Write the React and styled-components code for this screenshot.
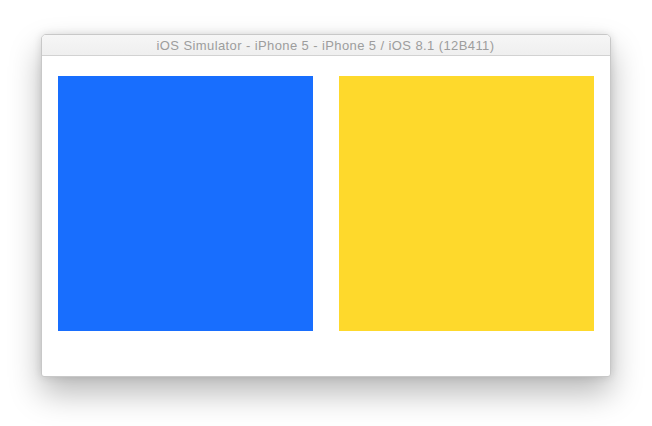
import React from "react";
import styled, { createGlobalStyle } from "styled-components";

const GlobalStyle = createGlobalStyle`
  html, body {
    margin: 0;
    padding: 0;
    background: #fff;
  }
  body {
    font-family: "Liberation Sans", Arial, sans-serif;
  }
`;

const Page = styled.div`
  width: 652px;
  height: 426px;
  display: flex;
  justify-content: center;
  align-items: flex-start;
  padding-top: 34px;
  box-sizing: border-box;
  overflow: hidden;
`;

const Window = styled.div`
  width: 568px;
  border-radius: 5px 5px 3px 3px;
  background: #fff;
  border: 1px solid #c8c8c8;
  box-sizing: content-box;
  margin-left: -1px;
  box-shadow: 0 16px 32px rgba(0, 0, 0, 0.28), 0 0 8px rgba(0, 0, 0, 0.12);
  overflow: hidden;
`;

const TitleBar = styled.div`
  height: 20px;
  background: linear-gradient(#f6f6f6, #efefef);
  border-bottom: 1px solid #d2d2d2;
  display: flex;
  align-items: center;
  justify-content: center;
  color: #9d9d9d;
  font-size: 13px;
  letter-spacing: 0.4px;
`;

const Screen = styled.div`
  height: 320px;
  display: flex;
  gap: 26px;
  padding: 20px 16px 0;
  box-sizing: border-box;
`;

const Square = styled.div`
  width: 255px;
  height: 255px;
  background: ${(p) => p.$color};
`;

export default function App() {
  return (
    <>
      <GlobalStyle />
      <Page>
        <Window>
          <TitleBar>iOS Simulator - iPhone 5 - iPhone 5 / iOS 8.1 (12B411)</TitleBar>
          <Screen>
            <Square $color="#186efe" />
            <Square $color="#fed92c" />
          </Screen>
        </Window>
      </Page>
    </>
  );
}
